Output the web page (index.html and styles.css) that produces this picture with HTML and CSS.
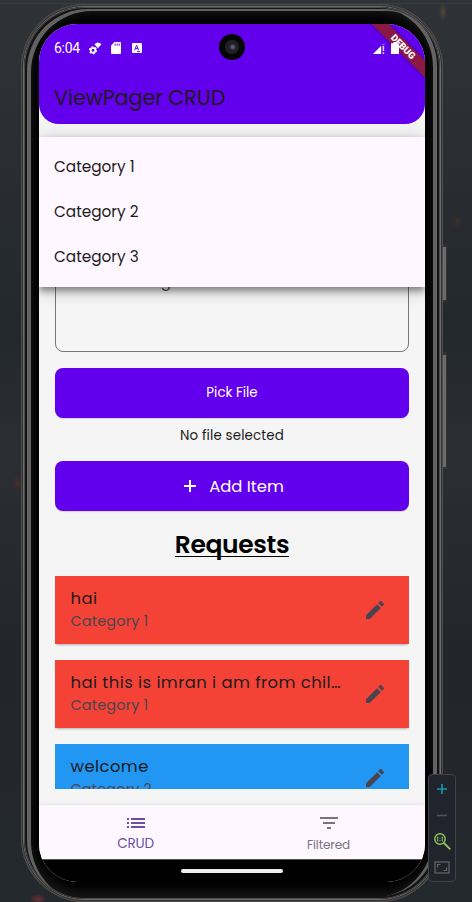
FILE: index.html
```html
<!DOCTYPE html>
<html lang="en">
<head>
<meta charset="utf-8">
<title>ViewPager CRUD</title>
<link rel="stylesheet" href="styles.css">
</head>
<body>
<div class="phone">
  <i class="side-key key-power"></i>
  <i class="side-key key-volume"></i>
  <div class="bezel">
    <div class="screen">
      <header class="appbar">
        <div class="status">
          <span class="clock">6:04</span>
          <svg class="st-gear" width="13" height="13" viewBox="0 0 13 13"><circle cx="4" cy="8.3" r="2.4" fill="none" stroke="#fff" stroke-width="1.8"/><circle cx="4" cy="8.3" r="3.5" fill="none" stroke="#fff" stroke-width="1.2" stroke-dasharray="1.8 1.86"/><path d="M5.4 2.2Q9 -1 12.4 2.2L8.9 6.2z" fill="#fff"/></svg>
          <svg class="st-sd" width="10" height="12" viewBox="0 0 10 12"><path d="M3.5 0H9q1 0 1 1v10q0 1-1 1H1q-1 0-1-1V3.5z" fill="#fff"/><path d="M4.2 1.5v2.3M6.2 1.5v2.3M8.2 1.5v2.3" stroke="#6200ee" stroke-width=".9"/></svg>
          <svg class="st-a" width="10" height="10" viewBox="0 0 10 10"><rect width="10" height="10" rx="1" fill="#fff"/><path d="M2.6 7.2L4.6 2.2L6.6 7.2M3.4 5.6h2.5M5.2 8.6h2.7" fill="none" stroke="#6200ee" stroke-width="1"/></svg>
          <svg class="st-signal" width="12" height="11" viewBox="0 0 12 11"><path d="M0 11L8.2 2.8V11z" fill="#fff"/><path d="M8.5 2.6L11.4 0v2.2H8.8z" fill="#fff" opacity=".45"/><path d="M10.4 3v5M10.4 9.3V11" stroke="#fff" stroke-width="1.5" opacity=".8"/></svg>
          <svg class="st-battery" width="8" height="12" viewBox="0 0 8 12"><path d="M2.4 0h3.2v1.3H8V12H0V1.3h2.4z" fill="#fff"/></svg>
        </div>
        <h1 class="title">ViewPager CRUD</h1>
      </header>
      <main class="content">
        <div class="field"><span class="hint">Enter Message</span></div>
        <button class="btn pick">Pick File</button>
        <p class="note">No file selected</p>
        <button class="btn add"><svg width="12" height="12" viewBox="0 0 12 12"><path d="M6 0v12M0 6h12" stroke="#fff" stroke-width="2"/></svg><span>Add Item</span></button>
        <h2 class="heading"><span>Requests</span></h2>
        <div class="list">
          <article class="item red">
            <div class="lines"><div class="name">hai</div><div class="cat">Category 1</div></div>
            <svg class="edit" width="18" height="18" viewBox="3 3 18 18"><path d="M3 17.25V21h3.75L17.81 9.94l-3.75-3.75L3 17.25zM20.71 7.04c.39-.39.39-1.02 0-1.41l-2.34-2.34c-.39-.39-1.02-.39-1.41 0l-1.83 1.83 3.75 3.75 1.83-1.83z"/></svg>
          </article>
          <article class="item red">
            <div class="lines"><div class="name">hai this is imran i am from chil…</div><div class="cat">Category 1</div></div>
            <svg class="edit" width="18" height="18" viewBox="3 3 18 18"><path d="M3 17.25V21h3.75L17.81 9.94l-3.75-3.75L3 17.25zM20.71 7.04c.39-.39.39-1.02 0-1.41l-2.34-2.34c-.39-.39-1.02-.39-1.41 0l-1.83 1.83 3.75 3.75 1.83-1.83z"/></svg>
          </article>
          <article class="item blue">
            <div class="lines"><div class="name">welcome</div><div class="cat">Category 2</div></div>
            <svg class="edit" width="18" height="18" viewBox="3 3 18 18"><path d="M3 17.25V21h3.75L17.81 9.94l-3.75-3.75L3 17.25zM20.71 7.04c.39-.39.39-1.02 0-1.41l-2.34-2.34c-.39-.39-1.02-.39-1.41 0l-1.83 1.83 3.75 3.75 1.83-1.83z"/></svg>
          </article>
        </div>
      </main>
      <nav class="tabs">
        <div class="tab active"><svg width="18" height="10" viewBox="0 0 18 10"><path d="M0 1h2M4 1h14M0 5h2M4 5h14M0 9h2M4 9h14" stroke="currentColor" stroke-width="2"/></svg><span>CRUD</span></div>
        <div class="tab"><svg width="18" height="12" viewBox="0 0 18 12"><path d="M0 1h18M3 6h12M7 11h4" stroke="currentColor" stroke-width="2"/></svg><span>Filtered</span></div>
      </nav>
      <footer class="gesture"><i></i></footer>
      <div class="menu"><div>Category 1</div><div>Category 2</div><div>Category 3</div></div>
      <div class="debug">DEBUG</div>
      <div class="camera"><i></i></div>
    </div>
  </div>
</div>
<aside class="tools">
  <svg width="26" height="107" viewBox="0 0 26 107" fill="none">
    <path d="M13 9v10M8 14h10" stroke="#139aa9" stroke-width="1.6"/>
    <path d="M8 40.5h10" stroke="#505257" stroke-width="1.6"/>
    <circle cx="11" cy="64" r="5.2" stroke="#8fc65a" stroke-width="1.4"/>
    <path d="M15 68l6.3 6.3" stroke="#8fc65a" stroke-width="1.8"/>
    <path d="M8.7 61.5v5M13.3 61.5v5M11 62.5v1M11 65v1" stroke="#8fc65a" stroke-width="1"/>
    <rect x="6" y="87" width="14" height="11" stroke="#65676c" stroke-width="1.2"/>
    <path d="M8.5 92.5v-3h3M17.5 92.5v3h-3" stroke="#65676c" stroke-width="1.2"/>
  </svg>
</aside>
</body>
</html>
```
FILE: styles.css
```css
* { box-sizing: border-box; }
html, body { margin: 0; height: 902px; overflow: hidden; }
body {
  position: relative;
  padding: 4px 0 0 21px;
  font-family: Poppins, Inter, sans-serif;
  color: #1d1b20;
  background:
    linear-gradient(#383b3e, #383b3e) 0 3px / 100% 1px no-repeat,
    radial-gradient(ellipse 5px 8px at 17px 483px, #482b2c, transparent),
    radial-gradient(ellipse 9px 5px at 38px 899px, #6b2f33, transparent),
    radial-gradient(ellipse 4px 10px at 443px 12px, #55453c, transparent),
    radial-gradient(ellipse 5px 7px at 457px 221px, #422b2d, transparent),
    linear-gradient(#2f3236 0, #292d31 180px, #23282c 330px, #2b2e32 450px, #222529 650px, #24292e 100%);
}
h1, h2, p { margin: 0; font-weight: 400; }
button { font: inherit; border: 0; padding: 0; }

.phone {
  position: relative;
  width: 422px;
  height: 898px;
  padding: 3px;
  border-radius: 64px;
  background: #6c6c6c;
  box-shadow: inset 0 0 0 1px #4c4c4c, inset 0 0 0 2px #333;
}
.bezel {
  height: 892px;
  padding: 17px 15px 0;
  border-radius: 61px;
  background: #000;
  box-shadow: inset 0 0 0 1px #4a4a4a, inset 3px 2px 0 #141414, inset -3px -2px 0 #141414, inset 7px 4px 0 #626262, inset -7px -1px 0 #626262, inset 0 0 10px 8px #151515;
}
.side-key { position: absolute; right: -4px; width: 4px; background: #6c6c6c; border: solid #333; border-width: 3px 1px 2px 0; }
.key-power { top: 240px; height: 58px; }
.key-volume { top: 348px; height: 117px; }

.screen {
  position: relative;
  width: 386px;
  height: 858px;
  border-radius: 38px;
  overflow: hidden;
  background: #f5f5f5;
  display: flex;
  flex-direction: column;
}
.appbar { height: 100px; flex: none; background: #6200ee; border-radius: 0 0 20px 20px; color: #1d1b20; }
.status { display: flex; align-items: center; height: 48px; padding: 0 26px 0 15px; }
.clock { font: 400 14px/16px Roboto, sans-serif; color: #fff; width: 35px; letter-spacing: -.3px; }
.st-sd { margin-left: 9px; }
.st-a { margin-left: 11px; }
.st-signal { margin-left: auto; }
.st-battery { margin-left: 6px; position: relative; z-index: 2; }
.title { padding-left: 15px; font-size: 20.6px; line-height: 32px; margin-top: 10px; }

.content { height: 681px; flex: none; padding: 128px 16px 16px; display: flex; flex-direction: column; }
.field { height: 100px; flex: none; border: 1px solid #77757a; border-radius: 8px; padding: 17px 15px; }
.hint { display: block; font-size: 15px; line-height: 24px; color: #49454f; }
.btn {
  height: 50px;
  flex: none;
  width: 354px;
  border-radius: 8px;
  background: #6200ee;
  color: #fff;
  box-shadow: 0 1px 1px #0002;
  display: flex;
  align-items: center;
  justify-content: center;
}
.pick { margin-top: 16px; font-size: 13.4px; letter-spacing: 0; }
.note { margin-top: 8px; height: 20px; flex: none; font-size: 13.4px; line-height: 20px; text-align: center; letter-spacing: .15px; }
.add { margin-top: 15px; padding-left: 4px; gap: 13px; font-size: 16.4px; letter-spacing: 0; }
.heading { height: 65px; flex: none; line-height: 68px; font-size: 25px; text-align: center; color: #000; }
.heading span { border-bottom: 1px solid #000; font-weight: 600; letter-spacing: -.35px; display: inline-block; line-height: 23px; height: 24px; }

.list { height: 213px; flex: none; overflow: hidden; display: flex; flex-direction: column; gap: 16px; }
.item { height: 68px; flex: none; display: flex; align-items: center; justify-content: space-between; padding: 0 25px 0 15.5px; box-shadow: 0 2px 2px -1px #0004; }
.red { background: #f44336; }
.blue { background: #2196f3; }
.lines { white-space: nowrap; padding-bottom: 1px; }
.name { font-size: 16.4px; line-height: 24px; letter-spacing: .46px; }
.cat { font-size: 14.4px; line-height: 21px; color: #49454f; letter-spacing: .2px; }
.edit { fill: #49454f; }

.tabs { height: 54px; flex: none; display: flex; background: #fef7ff; box-shadow: 0 -1px 2px #0001; }
.tab { flex: 1; display: flex; flex-direction: column; align-items: center; color: #79747e; font-size: 12px; padding-top: 12px; }
.tab span { line-height: 18px; margin-top: 7px; letter-spacing: -.1px; }
.tab.active { color: #6750a4; font-size: 13.5px; padding-top: 13px; }
.tab.active span { letter-spacing: -.2px; }
.gesture { flex: 1; background: #000; border-top: 1px solid #555; padding-top: 9px; }
.gesture i { display: block; width: 102px; height: 4px; margin: 0 auto; border-radius: 2px; background: #eee; }

.menu {
  position: absolute;
  left: 0;
  top: 113px;
  width: 386px;
  height: 150px;
  padding: 7px 15px;
  background: #fef7ff;
  box-shadow: 0 4px 7px #0006, 0 3px 18px #0003;
  font-size: 15.3px;
}
.menu div { height: 45px; line-height: 46px; }
.debug {
  position: absolute;
  right: -37.5px;
  top: 16.5px;
  width: 120px;
  height: 12px;
  transform: rotate(45deg);
  background: #8b1745;
  box-shadow: 0 0 4px #0006;
  color: #fff;
  font: 900 9.5px/12px Roboto, sans-serif;
  text-align: center;
}
.camera { position: absolute; left: 180px; top: 10px; width: 26px; height: 26px; border-radius: 50%; background: #050505; padding: 6px; }
.camera i { display: block; width: 14px; height: 14px; border-radius: 50%; background: radial-gradient(circle at 55% 50%, #566574 0 1px, #302037 3px, #171d20 5px, #252525 7px); }

.tools { position: absolute; left: 428px; top: 774px; width: 28px; height: 108px; border: 1px solid #414246; border-radius: 4px; background: #21242d; }
.tools svg { display: block; }
```
